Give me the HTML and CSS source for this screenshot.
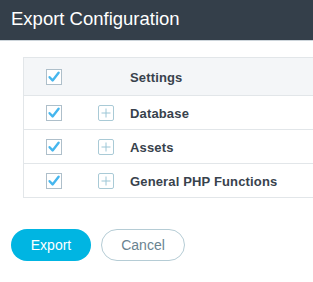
FILE: index.html
```html
<!DOCTYPE html>
<html>
<head>
<meta charset="utf-8">
<link rel="stylesheet" href="styles.css">
</head>
<body>
<div class="topbar"><h1 class="title">Export Configuration</h1></div>
<div class="content">
  <div class="table">
    <div class="row head">
      <span class="cb"><svg width="16" height="16" viewBox="0 0 16 16"><rect x="0.5" y="0.5" width="15" height="15" fill="#fff" stroke="#aebfca"/><path d="M3.6 8.2 L6.6 11.4 L12.6 3.8" fill="none" stroke="#45b6ee" stroke-width="2.4" stroke-linecap="round" stroke-linejoin="round"/></svg></span>
      <span class="spacer"></span>
      <span class="label">Settings</span>
    </div>
    <div class="row">
      <span class="cb"><svg width="16" height="16" viewBox="0 0 16 16"><rect x="0.5" y="0.5" width="15" height="15" fill="#fff" stroke="#aebfca"/><path d="M3.6 8.2 L6.6 11.4 L12.6 3.8" fill="none" stroke="#45b6ee" stroke-width="2.4" stroke-linecap="round" stroke-linejoin="round"/></svg></span>
      <span class="plus"><svg width="16" height="16" viewBox="0 0 16 16"><rect x="0.5" y="0.5" width="15" height="15" rx="1.5" fill="#fff" stroke="#a9cad6"/><path d="M8 3.5 V12.5 M3.5 8 H12.5" stroke="#9cc6d6" stroke-width="1"/></svg></span>
      <span class="label">Database</span>
    </div>
    <div class="row">
      <span class="cb"><svg width="16" height="16" viewBox="0 0 16 16"><rect x="0.5" y="0.5" width="15" height="15" fill="#fff" stroke="#aebfca"/><path d="M3.6 8.2 L6.6 11.4 L12.6 3.8" fill="none" stroke="#45b6ee" stroke-width="2.4" stroke-linecap="round" stroke-linejoin="round"/></svg></span>
      <span class="plus"><svg width="16" height="16" viewBox="0 0 16 16"><rect x="0.5" y="0.5" width="15" height="15" rx="1.5" fill="#fff" stroke="#a9cad6"/><path d="M8 3.5 V12.5 M3.5 8 H12.5" stroke="#9cc6d6" stroke-width="1"/></svg></span>
      <span class="label">Assets</span>
    </div>
    <div class="row">
      <span class="cb"><svg width="16" height="16" viewBox="0 0 16 16"><rect x="0.5" y="0.5" width="15" height="15" fill="#fff" stroke="#aebfca"/><path d="M3.6 8.2 L6.6 11.4 L12.6 3.8" fill="none" stroke="#45b6ee" stroke-width="2.4" stroke-linecap="round" stroke-linejoin="round"/></svg></span>
      <span class="plus"><svg width="16" height="16" viewBox="0 0 16 16"><rect x="0.5" y="0.5" width="15" height="15" rx="1.5" fill="#fff" stroke="#a9cad6"/><path d="M8 3.5 V12.5 M3.5 8 H12.5" stroke="#9cc6d6" stroke-width="1"/></svg></span>
      <span class="label">General PHP Functions</span>
    </div>
  </div>
  <div class="actions">
    <button class="btn primary">Export</button>
    <button class="btn secondary">Cancel</button>
  </div>
</div>
</body>
</html>
```
FILE: styles.css
```css
html, body {
  margin: 0;
  padding: 0;
  background: #fff;
  overflow: hidden;
}
body {
  font-family: "Liberation Sans", Arial, sans-serif;
  width: 313px;
  height: 282px;
}
.topbar {
  height: 40px;
  background: #343f4a;
  border-bottom: 1px solid #cdd5db;
  display: flex;
  align-items: center;
  padding-left: 11px;
}
.title {
  margin: 0;
  font-size: 18.5px;
  font-weight: normal;
  color: #fff;
  position: relative;
  top: -1px;
}
.content {
  padding-top: 16px;
}
.table {
  margin-left: 23px;
  width: 290px;
  border: 1px solid #e2e6e9;
  border-right: none;
}
.row {
  display: flex;
  align-items: center;
  height: 33px;
  border-top: 1px solid #e2e6e9;
  padding-left: 22px;
}
.row.head {
  border-top: none;
  height: 37px;
  background: #f4f6f8;
}
.cb, .plus, .spacer {
  display: flex;
  width: 16px;
  height: 16px;
}
.cb svg, .plus svg { display: block; }
.plus, .spacer {
  margin-left: 36px;
}
.label {
  margin-left: 16px;
  font-size: 13px;
  font-weight: bold;
  color: #38424c;
  letter-spacing: 0.15px;
  position: relative;
  top: 1px;
}
.actions {
  display: flex;
  gap: 10px;
  padding-left: 11px;
  margin-top: 31px;
}
.btn {
  height: 32px;
  border-radius: 16px;
  font-family: "Liberation Sans", Arial, sans-serif;
  font-size: 14px;
  padding: 0;
  cursor: pointer;
}
.primary {
  width: 80px;
  background: #00b5e2;
  border: none;
  color: #fff;
}
.secondary {
  width: 84px;
  background: #fff;
  border: 1px solid #b5ccd5;
  color: #6a8390;
}
```
